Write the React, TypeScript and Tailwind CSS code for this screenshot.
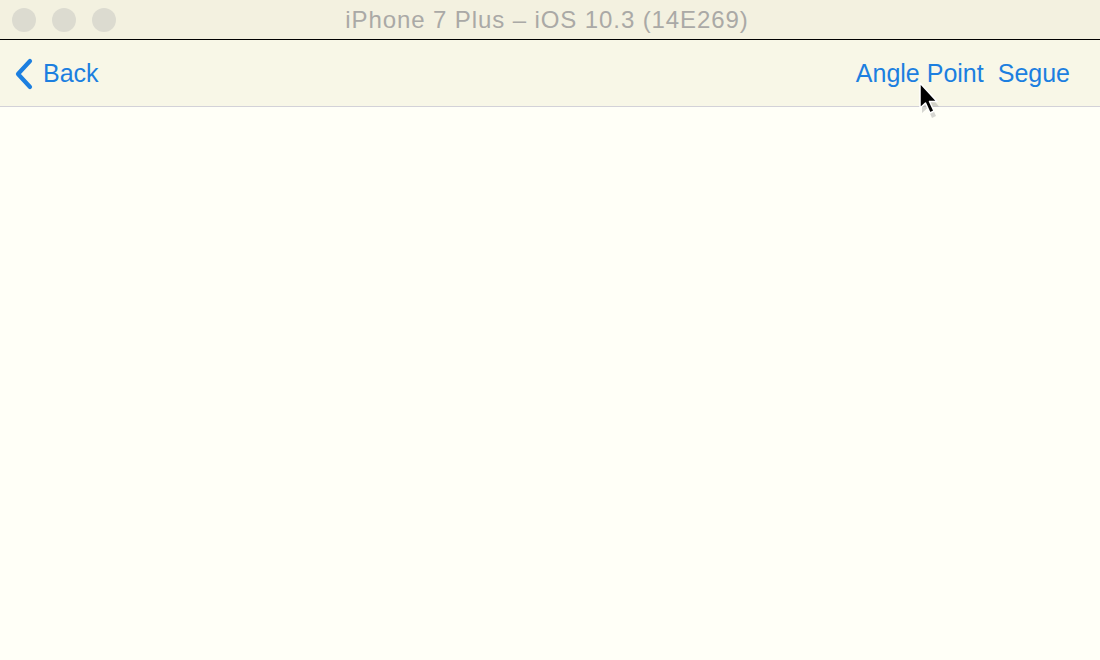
import React from 'react'

function TrafficLight() {
  return <div className="w-6 h-6 rounded-full bg-[#dcdbd0]" />
}

export default function App() {
  return (
    <div className="w-[1100px] h-[660px] flex flex-col bg-[#fffff7] overflow-hidden font-['Liberation_Sans',Arial,sans-serif]">
      {/* simulator window title */}
      <div className="h-[39px] flex items-center px-3 bg-[#f3f1e0] relative">
        <div className="flex gap-4">
          <TrafficLight />
          <TrafficLight />
          <TrafficLight />
        </div>
        <div className="absolute inset-0 flex items-center justify-center pr-[6px] text-[24px] tracking-[0.9px] text-[#aaa9a6]">
          iPhone 7 Plus – iOS 10.3 (14E269)
        </div>
      </div>
      <div className="h-px bg-black" />

      {/* navigation bar */}
      <div className="h-[67px] flex items-center justify-between pl-[14px] pr-[14px] bg-[#f8f7e7] border-b border-[#d3d2d8] relative">
        <button className="flex items-center gap-[10px] text-[#1c7fe0] text-[25px] pt-[2px]">
          <svg width="19" height="32" viewBox="0 0 19 32" fill="none">
            <path d="M16 3 L4 16 L16 29" stroke="#1c7fe0" strokeWidth="4.2" strokeLinecap="round" strokeLinejoin="round" />
          </svg>
          <span>Back</span>
        </button>
        <div className="flex gap-[14px] text-[#1c7fe0] text-[25px] pr-[16px] pt-[2px]">
          <span>Angle Point</span>
          <span>Segue</span>
        </div>
        {/* mouse pointer */}
        <svg className="absolute left-[916px] top-[41px]" width="28" height="40" viewBox="0 0 28 40">
          <path d="M6 5 L6 32 L11.5 27 L16 37 L20 35 L15.5 25.5 L23 25.5 Z" fill="#8a8a8a" opacity="0.35" />
          <path d="M4 2 L4 27 L9.5 22 L14 32 L18 30 L13.5 20.5 L21 20.5 Z" fill="#000" stroke="#fff" strokeWidth="1.5" strokeLinejoin="round" />
        </svg>
      </div>

      <div className="flex-1" />
    </div>
  )
}
